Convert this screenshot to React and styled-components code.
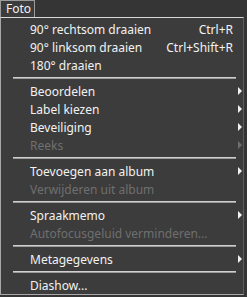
import React from "react";
import styled, { createGlobalStyle } from "styled-components";

const Global = createGlobalStyle`
  html, body { margin: 0; padding: 0; background: #353535; }
  body { width: 247px; height: 297px; overflow: hidden; }
`;

const Frame = styled.div`
  width: 247px;
  height: 297px;
  background: #353535;
  font-family: "Noto Sans", "Open Sans", sans-serif;
  font-size: 12px;
  color: #f2f2f2;
  display: flex;
  flex-direction: column;
`;

const TitleBox = styled.div`
  width: 35px;
  height: 17px;
  box-sizing: border-box;
  border: 1px solid #9c9c9c;
  border-bottom: none;
  background: #3c3c3c;
  padding-left: 5px;
  line-height: 16px;
`;

const Menu = styled.div`
  width: 244px;
  box-sizing: border-box;
  background: #3c3c3c;
  border-top: 1px solid #d8d8d8;
  border-left: 1px solid #a8a8a8;
  border-bottom: 1px solid #a8a8a8;
  border-right: 1px solid #5c5c5c;
  padding: 2px 0 0 0;
  display: flex;
  flex-direction: column;
`;

const Item = styled.div`
  height: 18px;
  display: grid;
  grid-template-columns: 1fr auto 10px;
  align-items: center;
  padding-left: 29px;
  color: ${(p) => (p.$disabled ? "#6f6f6f" : "#f2f2f2")};
  white-space: nowrap;
`;

const Shortcut = styled.span`
  padding-right: 0;
`;

const Arrow = styled.span`
  width: 0;
  height: 0;
  margin-left: 5px;
  border-top: 4px solid transparent;
  border-bottom: 4px solid transparent;
  border-left: 4px solid ${(p) => (p.$disabled ? "#6f6f6f" : "#f2f2f2")};
  justify-self: start;
`;

const Separator = styled.div`
  height: 8px;
  display: flex;
  align-items: center;
  padding: 0 7px 0 12px;
  &::after {
    content: "";
    flex: 1;
    height: 2px;
    background: linear-gradient(#d0d0d0 0 50%, #9a9a9a 50% 100%);
  }
`;

const entries = [
  { t: "90° rechtsom draaien", s: "Ctrl+R" },
  { t: "90° linksom draaien", s: "Ctrl+Shift+R" },
  { t: "180° draaien" },
  "sep",
  { t: "Beoordelen", sub: true },
  { t: "Label kiezen", sub: true },
  { t: "Beveiliging", sub: true },
  { t: "Reeks", sub: true, d: true },
  "sep",
  { t: "Toevoegen aan album", sub: true },
  { t: "Verwijderen uit album", d: true },
  "sep",
  { t: "Spraakmemo", sub: true },
  { t: "Autofocusgeluid verminderen...", d: true },
  "sep",
  { t: "Metagegevens", sub: true },
  "sep",
  { t: "Diashow..." },
];

export default function App() {
  return (
    <Frame>
      <Global />
      <TitleBox>Foto</TitleBox>
      <Menu>
        {entries.map((e, i) =>
          e === "sep" ? (
            <Separator key={i} />
          ) : (
            <Item key={i} $disabled={e.d}>
              <span>{e.t}</span>
              <Shortcut>{e.s || ""}</Shortcut>
              {e.sub ? <Arrow $disabled={e.d} /> : <span />}
            </Item>
          )
        )}
      </Menu>
    </Frame>
  );
}
